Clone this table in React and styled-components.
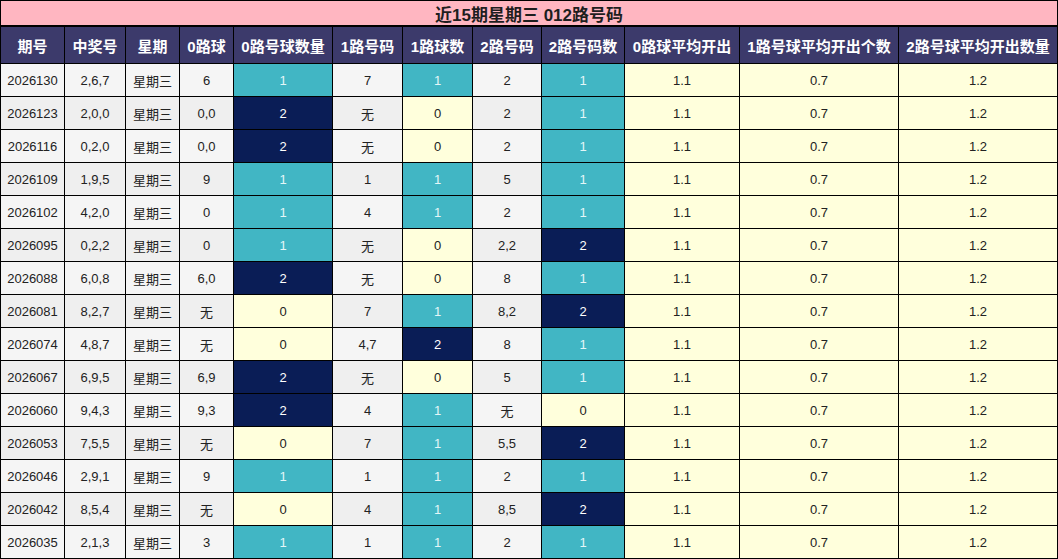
import React from "react";
import styled, { createGlobalStyle } from "styled-components";

const Global = createGlobalStyle`
  html, body { margin: 0; padding: 0; background: #fff; }
  body { font-family: "Liberation Sans", "Noto Sans CJK SC", sans-serif; }
`;

const COLS = "63px 60px 53px 53px 98px 69px 69px 68px 82px 114px 158px 158px";

const Sheet = styled.div`
  display: grid;
  grid-template-columns: ${COLS};
  grid-template-rows: 25px 36px;
  grid-auto-rows: 32px;
  gap: 1px;
  padding: 1px;
  width: 1058px;
  box-sizing: border-box;
  background: #000;
`;

const Title = styled.div`
  grid-column: 1 / -1;
  margin-bottom: 1px;
  background: #ffb6c1;
  color: #1e1e1e;
  font-weight: bold;
  font-size: 17px;
  display: flex;
  align-items: center;
  justify-content: center;
`;

const HeadCell = styled.div`
  background: #3c3a6b;
  color: #fff;
  font-weight: bold;
  font-size: 15px;
  display: flex;
  align-items: center;
  justify-content: center;
  white-space: nowrap;
`;

const toneBg = {
  row0: "#f5f5f5",
  row1: "#efefef",
  yellow: "#ffffdc",
  teal: "#41b6c4",
  navy: "#0a1d56",
};
const toneFg = {
  row0: "#222",
  row1: "#222",
  yellow: "#222",
  teal: "#e4f6f8",
  navy: "#fff",
};

const Cell = styled.div`
  background: ${(p) => toneBg[p.$tone]};
  color: ${(p) => toneFg[p.$tone]};
  font-size: 13px;
  display: flex;
  align-items: center;
  justify-content: center;
  white-space: nowrap;
`;

const headers = [
  "期号",
  "中奖号",
  "星期",
  "0路球",
  "0路号球数量",
  "1路号码",
  "1路球数",
  "2路号码",
  "2路号码数",
  "0路球平均开出",
  "1路号球平均开出个数",
  "2路号球平均开出数量",
];

const rows = [
  ["2026130", "2,6,7", "6", 1, "7", 1, "2", 1],
  ["2026123", "2,0,0", "0,0", 2, "无", 0, "2", 1],
  ["2026116", "0,2,0", "0,0", 2, "无", 0, "2", 1],
  ["2026109", "1,9,5", "9", 1, "1", 1, "5", 1],
  ["2026102", "4,2,0", "0", 1, "4", 1, "2", 1],
  ["2026095", "0,2,2", "0", 1, "无", 0, "2,2", 2],
  ["2026088", "6,0,8", "6,0", 2, "无", 0, "8", 1],
  ["2026081", "8,2,7", "无", 0, "7", 1, "8,2", 2],
  ["2026074", "4,8,7", "无", 0, "4,7", 2, "8", 1],
  ["2026067", "6,9,5", "6,9", 2, "无", 0, "5", 1],
  ["2026060", "9,4,3", "9,3", 2, "4", 1, "无", 0],
  ["2026053", "7,5,5", "无", 0, "7", 1, "5,5", 2],
  ["2026046", "2,9,1", "9", 1, "1", 1, "2", 1],
  ["2026042", "8,5,4", "无", 0, "4", 1, "8,5", 2],
  ["2026035", "2,1,3", "3", 1, "1", 1, "2", 1],
];

const countTone = (n) => (n === 0 ? "yellow" : n === 1 ? "teal" : "navy");

export default function App() {
  return (
    <>
      <Global />
      <Sheet>
        <Title>近15期星期三 012路号码</Title>
        {headers.map((h) => (
          <HeadCell key={h}>{h}</HeadCell>
        ))}
        {rows.map((r, i) => {
          const base = i % 2 === 0 ? "row0" : "row1";
          const [issue, nums, z, zc, o, oc, t, tc] = r;
          return (
            <React.Fragment key={issue}>
              <Cell $tone={base}>{issue}</Cell>
              <Cell $tone={base}>{nums}</Cell>
              <Cell $tone={base}>星期三</Cell>
              <Cell $tone={base}>{z}</Cell>
              <Cell $tone={countTone(zc)}>{zc}</Cell>
              <Cell $tone={base}>{o}</Cell>
              <Cell $tone={countTone(oc)}>{oc}</Cell>
              <Cell $tone={base}>{t}</Cell>
              <Cell $tone={countTone(tc)}>{tc}</Cell>
              <Cell $tone="yellow">1.1</Cell>
              <Cell $tone="yellow">0.7</Cell>
              <Cell $tone="yellow">1.2</Cell>
            </React.Fragment>
          );
        })}
      </Sheet>
    </>
  );
}
